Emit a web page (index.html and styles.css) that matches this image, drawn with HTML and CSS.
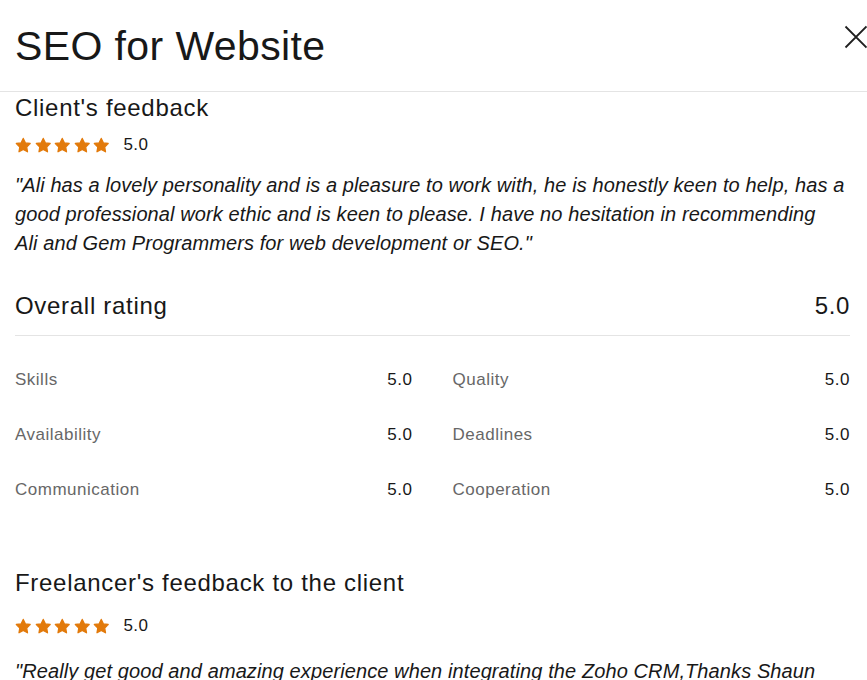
FILE: index.html
```html
<!DOCTYPE html>
<html lang="en">
<head>
<meta charset="utf-8">
<title>SEO for Website</title>
<link rel="stylesheet" href="styles.css">
</head>
<body>
<div class="modal">
  <header class="modal-header">
    <h1 class="title">SEO for Website</h1>
    <button class="close" aria-label="Close">
      <svg width="24" height="24" viewBox="0 0 24 24"><path d="M1.5 1.5L22.5 22.5M22.5 1.5L1.5 22.5" stroke="#1f1f1f" stroke-width="1.8" fill="none"/></svg>
    </button>
  </header>
  <section class="section">
    <h2 class="heading">Client's feedback</h2>
    <div class="stars-row">
      <span class="stars">
        <svg viewBox="0 0 16 16"><path d="M8 1.4l2 4.3 4.7.6-3.4 3.3.8 4.7L8 12l-4.1 2.3.8-4.7L1.3 6.3 6 5.7z"/></svg>
        <svg viewBox="0 0 16 16"><path d="M8 1.4l2 4.3 4.7.6-3.4 3.3.8 4.7L8 12l-4.1 2.3.8-4.7L1.3 6.3 6 5.7z"/></svg>
        <svg viewBox="0 0 16 16"><path d="M8 1.4l2 4.3 4.7.6-3.4 3.3.8 4.7L8 12l-4.1 2.3.8-4.7L1.3 6.3 6 5.7z"/></svg>
        <svg viewBox="0 0 16 16"><path d="M8 1.4l2 4.3 4.7.6-3.4 3.3.8 4.7L8 12l-4.1 2.3.8-4.7L1.3 6.3 6 5.7z"/></svg>
        <svg viewBox="0 0 16 16"><path d="M8 1.4l2 4.3 4.7.6-3.4 3.3.8 4.7L8 12l-4.1 2.3.8-4.7L1.3 6.3 6 5.7z"/></svg>
      </span>
      <span class="score">5.0</span>
    </div>
    <p class="quote">"Ali has a lovely personality and is a pleasure to work with, he is honestly keen to help, has a good professional work ethic and is keen to please. I have no hesitation in recommending <span class="nowrap">Ali and Gem Programmers</span> for web development or SEO."</p>
  </section>
  <section class="overall">
    <div class="overall-row">
      <h2 class="heading">Overall rating</h2>
      <span class="overall-score">5.0</span>
    </div>
    <div class="grid">
      <div class="cell"><span class="label">Skills</span><span class="value">5.0</span></div>
      <div class="cell"><span class="label">Quality</span><span class="value">5.0</span></div>
      <div class="cell"><span class="label">Availability</span><span class="value">5.0</span></div>
      <div class="cell"><span class="label">Deadlines</span><span class="value">5.0</span></div>
      <div class="cell"><span class="label">Communication</span><span class="value">5.0</span></div>
      <div class="cell"><span class="label">Cooperation</span><span class="value">5.0</span></div>
    </div>
  </section>
  <section class="section freelancer">
    <h2 class="heading">Freelancer's feedback to the client</h2>
    <div class="stars-row">
      <span class="stars">
        <svg viewBox="0 0 16 16"><path d="M8 1.4l2 4.3 4.7.6-3.4 3.3.8 4.7L8 12l-4.1 2.3.8-4.7L1.3 6.3 6 5.7z"/></svg>
        <svg viewBox="0 0 16 16"><path d="M8 1.4l2 4.3 4.7.6-3.4 3.3.8 4.7L8 12l-4.1 2.3.8-4.7L1.3 6.3 6 5.7z"/></svg>
        <svg viewBox="0 0 16 16"><path d="M8 1.4l2 4.3 4.7.6-3.4 3.3.8 4.7L8 12l-4.1 2.3.8-4.7L1.3 6.3 6 5.7z"/></svg>
        <svg viewBox="0 0 16 16"><path d="M8 1.4l2 4.3 4.7.6-3.4 3.3.8 4.7L8 12l-4.1 2.3.8-4.7L1.3 6.3 6 5.7z"/></svg>
        <svg viewBox="0 0 16 16"><path d="M8 1.4l2 4.3 4.7.6-3.4 3.3.8 4.7L8 12l-4.1 2.3.8-4.7L1.3 6.3 6 5.7z"/></svg>
      </span>
      <span class="score">5.0</span>
    </div>
    <p class="quote">"Really get good and amazing experience when integrating the Zoho CRM,Thanks Shaun <span class="nowrap">for the</span> opportunity."</p>
  </section>
</div>
</body>
</html>
```
FILE: styles.css
```css
* { box-sizing: border-box; }
html, body { margin: 0; padding: 0; background: #fff; }
body {
  font-family: "Liberation Sans", Arial, sans-serif;
  color: #181818;
  overflow: hidden;
  height: 680px;
}
.modal { width: 867px; }
.modal-header {
  display: flex;
  justify-content: space-between;
  align-items: flex-start;
  padding: 22px 0 0 15px;
  height: 92px;
  border-bottom: 1px solid #e4e4e4;
}
.title {
  margin: 0;
  font-weight: 400;
  font-size: 41px;
  line-height: 48px;
  letter-spacing: 0.4px;
}
.close {
  border: 0;
  background: none;
  padding: 0;
  margin: 3px -1px 0 0;
  width: 24px;
  height: 24px;
  cursor: pointer;
}
.close svg { display: block; }
.section { padding: 0 15px; }
.heading {
  margin: 0;
  font-weight: 400;
  font-size: 24px;
  line-height: 32px;
  letter-spacing: 0.7px;
}
.stars-row {
  display: flex;
  align-items: center;
  gap: 14px;
  margin-top: 9px;
  height: 24px;
}
.stars { display: flex; gap: 3px; }
.stars svg { width: 16.5px; height: 16.5px; display: block; }
.stars path {
  fill: #e27a0b;
  stroke: #e27a0b;
  stroke-width: 1.3;
  stroke-linejoin: round;
}
.score { font-size: 17px; letter-spacing: 0.4px; }
.quote {
  margin: 14px 0 0;
  font-style: italic;
  font-size: 20px;
  line-height: 29px;
  letter-spacing: 0.1px;
}
.nowrap { white-space: nowrap; }
.overall { padding: 0 17px 0 15px; margin-top: 32px; }
.overall-row {
  display: flex;
  justify-content: space-between;
  align-items: center;
  padding-bottom: 13px;
  border-bottom: 1px solid #e4e4e4;
}
.overall-score { font-size: 24px; letter-spacing: 0.6px; }
.grid {
  display: grid;
  grid-template-columns: 1fr 1fr;
  column-gap: 40px;
  row-gap: 31px;
  padding-top: 32px;
}
.cell {
  display: flex;
  justify-content: space-between;
  align-items: center;
  height: 24px;
  font-size: 17px;
  letter-spacing: 0.5px;
}
.label { color: #676767; }
.value { color: #181818; }
.freelancer { margin-top: 65px; }
.freelancer .stars-row { margin-top: 15px; }
.freelancer .quote { margin-top: 19px; }
```
